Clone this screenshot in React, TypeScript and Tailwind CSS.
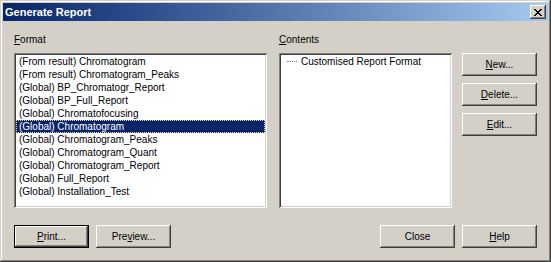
const formats = [
  "(From result) Chromatogram",
  "(From result) Chromatogram_Peaks",
  "(Global) BP_Chromatogr_Report",
  "(Global) BP_Full_Report",
  "(Global) Chromatofocusing",
  "(Global) Chromatogram",
  "(Global) Chromatogram_Peaks",
  "(Global) Chromatogram_Quant",
  "(Global) Chromatogram_Report",
  "(Global) Full_Report",
  "(Global) Installation_Test",
];

const raised =
  "shadow-[inset_-1px_-1px_#404040,inset_1px_1px_#ffffff,inset_-2px_-2px_#808080,inset_2px_2px_#d4d0c8]";
const sunken =
  "shadow-[inset_1px_1px_#808080,inset_-1px_-1px_#ffffff,inset_2px_2px_#404040,inset_-2px_-2px_#d4d0c8]";

function Button({ children, isDefault = false }: { children: React.ReactNode; isDefault?: boolean }) {
  if (isDefault) {
    return (
      <div className="w-[75px] h-[23px] border border-black">
        <button
          className={`w-full h-full bg-[#d4d0c8] text-black text-[10px] leading-[13px] shadow-[inset_-1px_-1px_#404040,inset_1px_1px_#ffffff,inset_-2px_-2px_#808080,inset_2px_2px_#d4d0c8]`}
        >
          {children}
        </button>
      </div>
    );
  }
  return (
    <button className={`w-[75px] h-[23px] bg-[#d4d0c8] text-black text-[10px] leading-[13px] ${raised}`}>
      {children}
    </button>
  );
}

export default function App() {
  const selected = 5;

  return (
    <div
      className={`w-[551px] h-[262px] bg-[#d4d0c8] p-[3px] flex flex-col font-['Liberation_Sans',Arial,sans-serif] text-black shadow-[inset_-1px_-1px_#404040,inset_1px_1px_#d4d0c8,inset_-2px_-2px_#808080,inset_2px_2px_#ffffff]`}
    >
      {/* Title bar */}
      <div className="h-[18px] flex items-center justify-between pl-[2px] pr-[2px] bg-gradient-to-r from-[#0a246a] to-[#a6caf0]">
        <span className="text-white font-bold text-[11px] leading-[13px]">Generate Report</span>
        <button className={`w-[16px] h-[14px] bg-[#d4d0c8] flex items-center justify-center ${raised}`}>
          <svg width="8" height="7" viewBox="0 0 8 7" shapeRendering="crispEdges">
            <path d="M0 0h2v1H0zM6 0h2v1H6zM1 1h2v1H1zM5 1h2v1H5zM2 2h4v1H2zM3 3h2v1H3zM2 4h4v1H2zM1 5h2v1H1zM5 5h2v1H5zM0 6h2v1H0zM6 6h2v1H6z" fill="#000" />
          </svg>
        </button>
      </div>

      <div className="flex-1 px-[11px] pt-[12px] flex flex-col text-[10px]">
        <div className="flex">
          {/* Format */}
          <div className="w-[253px]">
            <div className="h-[13px] leading-[13px]">
              <span className="underline">F</span>ormat
            </div>
            <div className={`mt-[7px] h-[155px] bg-white p-[2px] ${sunken}`}>
              {formats.map((f, i) => (
                <div
                  key={f}
                  className={`h-[13px] leading-[12px] pl-[2px] whitespace-nowrap ${
                    i === selected
                      ? "bg-[#0a246a] text-white border border-dotted border-[#f5dc95]"
                      : "border border-transparent"
                  }`}
                >
                  {f}
                </div>
              ))}
            </div>
          </div>

          {/* Contents */}
          <div className="w-[173px] ml-[12px]">
            <div className="h-[13px] leading-[13px]">
              <span className="underline">C</span>ontents
            </div>
            <div className={`mt-[7px] h-[155px] bg-white p-[2px] ${sunken}`}>
              <div className="h-[13px] flex items-center whitespace-nowrap">
                <span className="ml-[6px] w-[10px] border-t border-dotted border-[#808080]" />
                <span className="ml-[4px] leading-[13px]">Customised Report Format</span>
              </div>
            </div>
          </div>

          {/* Side buttons */}
          <div className="ml-[10px] pt-[20px] flex flex-col gap-[7px]">
            <Button>
              <span className="underline">N</span>ew...
            </Button>
            <Button>
              <span className="underline">D</span>elete...
            </Button>
            <Button>
              <span className="underline">E</span>dit...
            </Button>
          </div>
        </div>

        {/* Bottom buttons */}
        <div className="mt-[17px] flex">
          <Button isDefault>
            <span className="underline">P</span>rint...
          </Button>
          <div className="ml-[7px]">
            <Button>
              Pre<span className="underline">v</span>iew...
            </Button>
          </div>
          <div className="ml-auto">
            <Button>Close</Button>
          </div>
          <div className="ml-[7px]">
            <Button>
              <span className="underline">H</span>elp
            </Button>
          </div>
        </div>
      </div>
    </div>
  );
}
